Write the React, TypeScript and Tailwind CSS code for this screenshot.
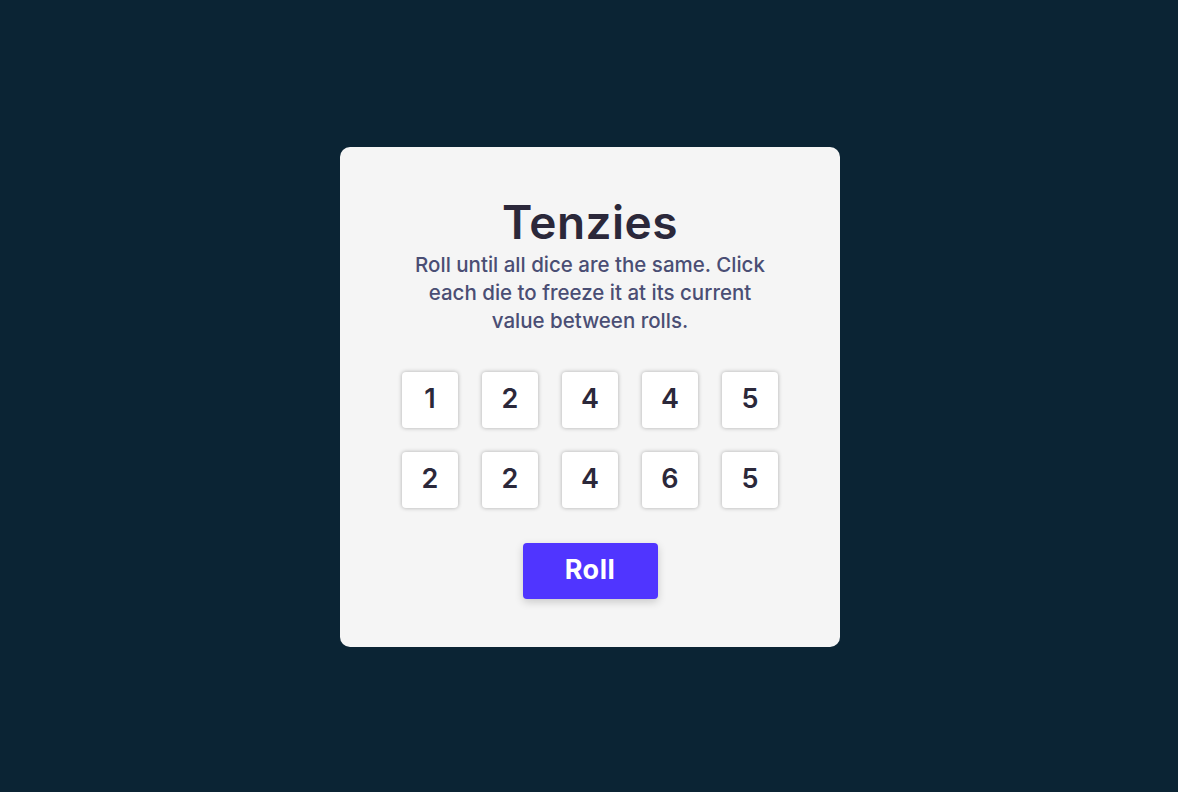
const dice = [1, 2, 4, 4, 5, 2, 2, 4, 6, 5];

function Die({ value }: { value: number }) {
  return (
    <button className="flex h-[56px] w-[56px] items-center justify-center rounded-[4px] bg-white text-[27px] font-semibold text-[#2b283a] shadow-[0_0_4px_rgba(0,0,0,0.3)]">
      {value}
    </button>
  );
}

export default function App() {
  return (
    <main className="flex min-h-screen items-center justify-center bg-[#0b2434] pt-[2px] pl-[2px] font-['Inter',sans-serif]">
      <div className="flex h-[500px] w-[500px] flex-col items-center justify-center rounded-[10px] bg-[#f5f5f5]">
        <h1 className="mt-[4px] text-[46px] leading-[44px] font-semibold tracking-[0.5px] text-[#2b283a]">Tenzies</h1>
        <p className="mt-[7px] max-w-[370px] text-center text-[20.5px] leading-[28px] font-medium text-[#4a4e74]">
          Roll until all dice are the same. Click each die to freeze it at its current value between rolls.
        </p>
        <div className="mt-[37px] grid grid-cols-5 gap-[24px]">
          {dice.map((d, i) => (
            <Die key={i} value={d} />
          ))}
        </div>
        <button className="mt-[35px] h-[56px] w-[135px] rounded-[4px] bg-[#5035ff] text-[27px] font-bold tracking-[0.5px] text-white shadow-[0_3px_8px_rgba(0,0,0,0.18)]">
          Roll
        </button>
      </div>
    </main>
  );
}
